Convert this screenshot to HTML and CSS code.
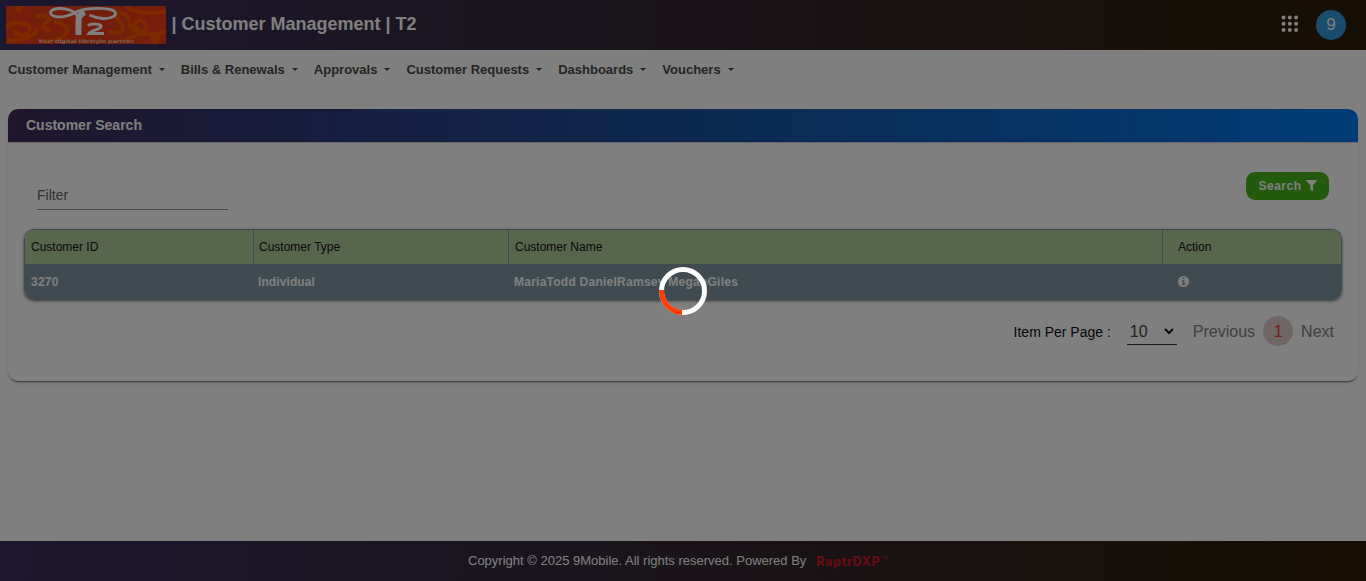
FILE: index.html
```html
<!DOCTYPE html>
<html lang="en">
<head>
<meta charset="utf-8">
<title>Customer Management | T2</title>
<link rel="stylesheet" href="styles.css">
</head>
<body>
<header class="topbar">
  <svg class="logo" width="160" height="38" viewBox="0 0 160 38">
    <rect width="160" height="38" fill="#ea3c18"/>
    <g fill="none" stroke="#fa5500" stroke-width="4" stroke-linecap="round">
      <path d="M2 20c6-5 22-4 22 3s-13 8-14 3M2 34c14 1 26-3 29-10M32 10c8-2 14 3 9 6s-4 7 2 8M50 16c8 2 14 6 10 12s-14 7-20 7M104 26c10 3 15-3 12-8s-9-7-4-10 10 2 11 8 6 12 14 9-1-15-7-9 10 16 28 10M121 1c8 7 22 7 38 5M120 34c8-5 14-7 20-6"/>
    </g>
    <circle cx="13" cy="2" r="4" fill="#fa5500"/><circle cx="149" cy="33" r="5" fill="#fa5500"/>
    <g fill="none" stroke="#fff">
      <path stroke-width="2.800" d="M73 14C71 6 63 2.500 54 2.500c-6 0-9.500 2-9.500 4.300S48 11 53 11c9 0 13-3 18-5.500C77 2.800 85 2.300 93 2.300c10 0 16.500 2 16.500 5.200s-6 5-12 5c-7 0-10-1.500-14-3.500"/>
      <path stroke-width="6" d="M72.500 29V14c0-4 2-6 6-8"/>
      <path stroke-width="3" d="M82 19.500c3-2 13-2 13 1 0 3-10 3.500-12 7h15"/>
    </g>
    <text x="32" y="37" textLength="96" lengthAdjust="spacingAndGlyphs" class="logo-tag">Your digital lifestyle partner</text>
  </svg>
  <h1 class="title">| Customer Management | T2</h1>
  <svg class="apps" width="18" height="18" viewBox="0 0 18 18" fill="#fff">
    <circle cx="2.5" cy="2.5" r="2"/><circle cx="8.8" cy="2.5" r="2"/><circle cx="15.1" cy="2.5" r="2"/>
    <circle cx="2.5" cy="8.8" r="2"/><circle cx="8.8" cy="8.8" r="2"/><circle cx="15.1" cy="8.8" r="2"/>
    <circle cx="2.5" cy="15.1" r="2"/><circle cx="8.8" cy="15.1" r="2"/><circle cx="15.1" cy="15.1" r="2"/>
  </svg>
  <div class="avatar">9</div>
</header>
<nav class="menu">
  <a class="menu-item">Customer Management</a>
  <a class="menu-item">Bills &amp; Renewals</a>
  <a class="menu-item">Approvals</a>
  <a class="menu-item">Customer Requests</a>
  <a class="menu-item">Dashboards</a>
  <a class="menu-item">Vouchers</a>
</nav>
<main class="panel">
  <h2 class="panel-head">Customer Search</h2>
  <div class="panel-body">
    <div class="tools">
      <div class="filter">Filter</div>
      <button class="search">Search
        <svg width="11" height="11" viewBox="0 0 11 11"><path fill="#fff" d="M.3 0h10.4c.4 0 .4.6.1.9L7 5v5.500c0 .5-.4.6-.8.3L4.300 9.200V5L.2.9C-.1.6-.1 0 .3 0z"/></svg>
      </button>
    </div>
    <div class="table">
      <div class="row row-head"><span>Customer ID</span><span class="type">Customer Type</span><span>Customer Name</span><span class="action">Action</span></div>
      <div class="row row-data"><span>3270</span><span class="type">Individual</span><span class="name">MariaTodd DanielRamsey MeganGiles</span><span class="action"><svg width="11" height="11" viewBox="0 0 11 11"><circle cx="5.5" cy="5.5" r="5.5" fill="#fff"/><path fill="#7e97a2" d="M4.6 1.500h1.900v1.600H4.600zM3.900 4.200h2.600v3.500h.8v1.200H3.900V7.700h.8V5.400h-.8z"/></svg></span></div>
    </div>
    <div class="pager">
      <span class="per-page">Item Per Page :</span>
      <span class="select">10<svg width="10" height="7" viewBox="0 0 10 7"><path d="M1 1l4 4 4-4" fill="none" stroke="#111" stroke-width="2"/></svg></span>
      <span class="prev">Previous</span>
      <span class="page">1</span>
      <span class="next">Next</span>
    </div>
  </div>
</main>
<footer class="footer"><span class="copy">Copyright © 2025 9Mobile. All rights reserved. Powered By</span><span class="brand">RaptrDXP<span class="tm">™</span></span></footer>
<div class="overlay">
  <svg class="spinner" width="50" height="50" viewBox="0 0 50 50" fill="none" stroke-width="5">
    <circle cx="25" cy="25" r="21.5" stroke="#fff"/>
    <path d="M24 46.500A21.500 21.500 0 0 1 3.500 24" stroke="#ff3d00"/>
  </svg>
</div>
</body>
</html>
```
FILE: styles.css
```css
* { box-sizing: border-box; }
body {
  margin: 0;
  height: 581px;
  display: flex;
  flex-direction: column;
  overflow: hidden;
  background: #fff;
  font-family: "Liberation Sans", Arial, sans-serif;
}
.topbar {
  height: 50px;
  flex: none;
  display: flex;
  align-items: center;
  padding: 0 20px 0 6px;
  background: linear-gradient(to right, #3a3060, #2e1e06);
}
.logo-tag { font: 5px "DejaVu Sans", sans-serif; fill: #fff; }
.title {
  flex: 1;
  margin: 0 0 2px 5.5px;
  font-size: 18px;
  line-height: 24px;
  color: #fff;
}
.apps { margin: 0 17px 2px 0; }
.avatar {
  width: 30px;
  height: 30px;
  border-radius: 50%;
  background: #3498db;
  color: #fff;
  font-size: 17px;
  line-height: 30px;
  text-align: center;
}
.menu {
  height: 59px;
  flex: none;
  display: flex;
  gap: 16px;
  padding: 9px 8px;
}
.menu-item {
  display: flex;
  align-items: center;
  height: 20px;
  font-size: 13px;
  font-weight: bold;
  color: #494949;
}
.menu-item::after {
  content: "";
  margin: 1px 0 0 7px;
  border: 3px solid transparent;
  border-top-color: #494949;
  border-bottom: 0;
}
.panel {
  flex: none;
  height: 272px;
  margin: 0 8px;
  border-radius: 10px;
  box-shadow: 0 2px 2px -1px rgba(0,0,0,.55), 0 3px 6px -2px rgba(0,0,0,.12);
}
.panel-head {
  height: 33px;
  margin: 0;
  padding-left: 18px;
  border-radius: 10px 10px 0 0;
  background: linear-gradient(to right, #402c5a, #2a4084 28%, #1c529e 50%, #0078ee);
  box-shadow: 0 1px 0 #ccc;
  color: #fff;
  font-size: 14px;
  line-height: 33px;
}
.panel-body { padding: 30px 16px 0; }
.tools {
  display: flex;
  justify-content: space-between;
  align-items: flex-start;
  height: 57px;
  padding: 0 13px;
}
.filter {
  width: 191px;
  height: 38px;
  padding-top: 13px;
  border-bottom: 1px solid #8a9095;
  color: #646464;
  font-size: 14px;
  line-height: 20px;
}
.search {
  display: flex;
  align-items: center;
  justify-content: center;
  gap: 4px;
  width: 83px;
  height: 28px;
  padding: 0 0 1px;
  border: 0;
  border-radius: 9px;
  background: #46b41a;
  color: #fff;
  font: bold 12px "Liberation Sans", Arial, sans-serif;
  letter-spacing: .5px;
}
.table {
  height: 71px;
  overflow: hidden;
  border: 1px solid #7e97a2;
  border-bottom: 0;
  border-radius: 10px;
  box-shadow: 0 1px 3px rgba(0,0,0,.6);
}
.row {
  display: grid;
  grid-template-columns: 229px 255px 654px 1fr;
  align-items: stretch;
}
.row span { padding-left: 6px; }
.row .type { padding-left: 5px; }
.row-head span:not(:last-child) { border-right: 1px solid #7e97a2; }
.row-head {
  height: 34px;
  background: #b0cc98;
  color: #111;
  font-size: 12px;
  line-height: 34px;
}
.row-data {
  height: 36px;
  background: #7e97a2;
  color: #fff;
  font-size: 12px;
  font-weight: bold;
  line-height: 36px;
  letter-spacing: .25px;
}
.row-data .type { padding-left: 4px; letter-spacing: .1px; }
.row-data .name { padding-left: 5px; }
.row .action { padding-left: 15px; }
.row-data svg { vertical-align: -1px; }
.pager {
  display: flex;
  justify-content: flex-end;
  align-items: center;
  height: 30px;
  margin-top: 16px;
  padding-right: 8px;
  color: #808080;
  font-size: 16px;
}
.prev, .next { padding-top: 2px; }
.per-page {
  margin-right: 16px;
  padding-top: 2px;
  color: #111;
  font-size: 14px;
}
.select {
  display: flex;
  align-items: center;
  justify-content: space-between;
  width: 50px;
  height: 26px;
  margin: 2px 16px 0 0;
  padding: 0 3px;
  border-bottom: 1px solid #333;
  color: #444;
}
.page {
  width: 30px;
  height: 30px;
  margin: 0 8px;
  border-radius: 50%;
  background: #e0cdcd;
  color: #e73a27;
  line-height: 31px;
  text-align: center;
}
.footer {
  height: 40px;
  margin-top: auto;
  display: flex;
  align-items: center;
  padding: 0 0 1px 468px;
  background: linear-gradient(to right, #3a3060, #2e1e06);
  color: #fff;
  font-size: 13px;
}
.brand {
  display: flex;
  margin: 1px 0 0 10px;
  color: #c81b29;
  font: 800 12.5px Inter, sans-serif;
  letter-spacing: .5px;
}
.tm { font-weight: 300; letter-spacing: 0; }
.overlay {
  position: absolute;
  inset: 0;
  background: rgba(0,0,0,.5);
}
.spinner {
  position: absolute;
  left: 658px;
  top: 266px;
}
```
